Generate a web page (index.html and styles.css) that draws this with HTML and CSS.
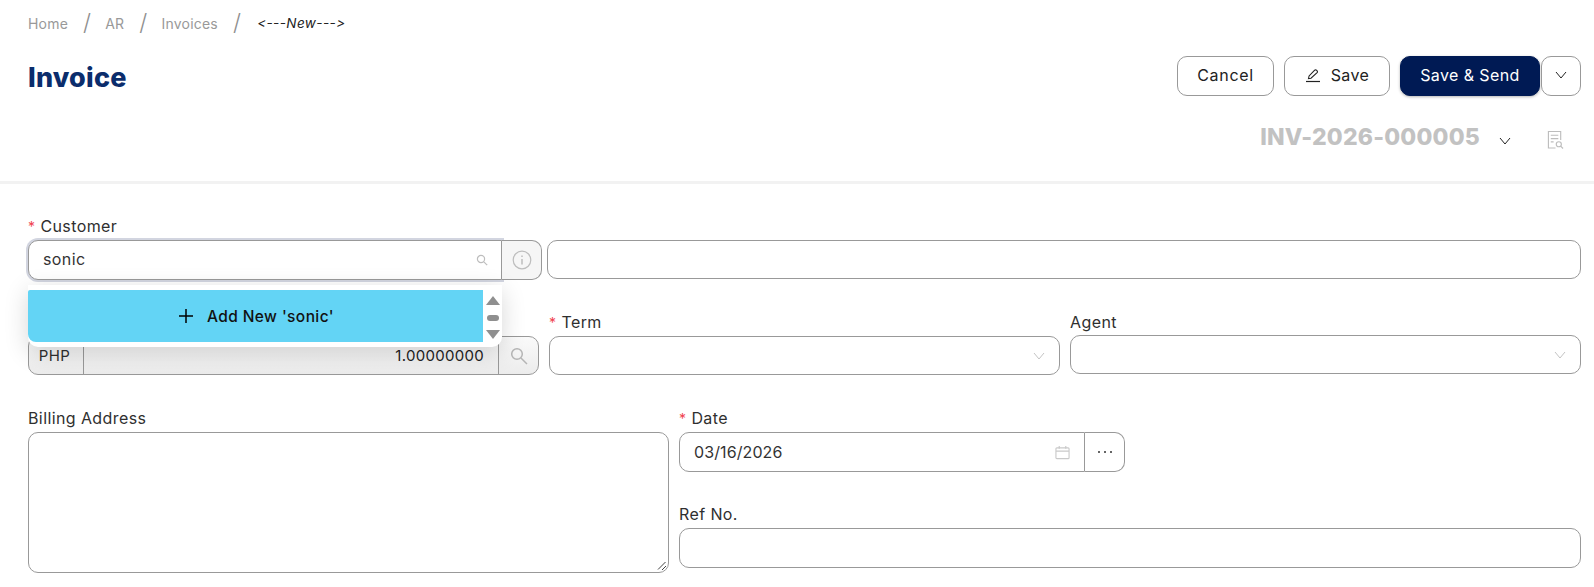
FILE: index.html
```html
<!DOCTYPE html>
<html lang="en">
<head>
<meta charset="utf-8">
<title>Invoice</title>
<link rel="stylesheet" href="styles.css">
</head>
<body>
<header class="head">
  <nav class="crumbs">
    <span class="crumb">Home</span><span class="sep">/</span>
    <span class="crumb">AR</span><span class="sep">/</span>
    <span class="crumb">Invoices</span><span class="sep">/</span>
    <span class="crumb-now">&lt;---New---&gt;</span>
  </nav>
  <div class="title-row">
    <h1 class="title">Invoice</h1>
    <div class="actions">
      <button class="btn btn-cancel">Cancel</button>
      <button class="btn btn-save">
        <svg class="pen" viewBox="0 0 16 16" width="16" height="16" fill="none" stroke="#222" stroke-width="1.1"><path d="M3.5 11.5l.6-2.6 5.6-5.7a1.2 1.2 0 0 1 1.7 0l.7.7a1.2 1.2 0 0 1 0 1.7L6 11.2z"/><path d="M1 14.5h14" stroke-width="1.2"/></svg>
        Save</button>
      <div class="split">
        <button class="btn btn-send">Save &amp; Send</button>
        <button class="btn btn-more"><svg viewBox="0 0 12 8" width="12" height="8" fill="none" stroke="#222" stroke-width="1"><path d="M1 1l5 6 5-6"/></svg></button>
      </div>
    </div>
  </div>
  <div class="number-row">
    <span class="number">INV-2026-000005</span>
    <svg class="num-chev" viewBox="0 0 12 8" width="12" height="8" fill="none" stroke="#222" stroke-width="1"><path d="M1 1l5 6 5-6"/></svg>
    <svg class="num-icon" viewBox="0 0 18 20" width="17" height="20" fill="none" stroke="#bdbdbd" stroke-width="1.2"><path d="M9 18.5H1.5V1h13v9"/><path d="M4 5h8M4 8.5h8M4 12h3"/><circle cx="12.5" cy="14.5" r="2.7"/><path d="M14.5 16.5l2.5 2.5"/></svg>
  </div>
</header>

<main class="form">
  <div class="row-customer">
    <div class="field field-customer">
      <label class="label"><span class="req">*</span>Customer</label>
      <div class="group group-focus">
        <div class="control control-focus">
          <span class="value value-search">sonic</span>
          <svg class="search-sm" viewBox="0 0 12 12" width="12" height="12" fill="none" stroke="#bdbdbd" stroke-width="1.2"><circle cx="5" cy="5" r="3.6"/><path d="M7.8 7.8l3.4 3.4"/></svg>
        </div>
        <div class="addon addon-info">
          <svg viewBox="0 0 20 20" width="20" height="20" fill="none" stroke="#bdbdbd" stroke-width="1.2"><circle cx="10" cy="10" r="8.8"/><path d="M10 9v5.5" stroke-width="1.5"/><path d="M10 5.4v1.6" stroke-width="1.5"/></svg>
        </div>
      </div>
      <div class="menu">
        <div class="menu-item">
          <svg viewBox="0 0 14 14" width="14" height="14" fill="none" stroke="#000" stroke-width="1.5"><path d="M7 0v14M0 7h14"/></svg>
          <span>Add New 'sonic'</span>
        </div>
        <div class="scroll">
          <span class="tri-up"></span>
          <span class="thumb"></span>
          <span class="tri-down"></span>
        </div>
      </div>
    </div>
    <div class="field field-name">
      <div class="control plain"></div>
    </div>
  </div>

  <div class="row-three">
    <div class="field field-currency">
      <div class="group group-gray">
        <div class="cur">PHP</div>
        <div class="rate">1.00000000</div>
        <div class="addon addon-search">
          <svg viewBox="0 0 18 18" width="18" height="18" fill="none" stroke="#b5b5b5" stroke-width="1.5"><circle cx="7" cy="7" r="5.3"/><path d="M11 11l6 6"/></svg>
        </div>
      </div>
    </div>
    <div class="field">
      <label class="label"><span class="req">*</span>Term</label>
      <div class="control select select-term">
        <svg viewBox="0 0 12 8" width="12" height="8" fill="none" stroke="#c4c4c4" stroke-width="1"><path d="M1 1l5 6 5-6"/></svg>
      </div>
    </div>
    <div class="field">
      <label class="label">Agent</label>
      <div class="control select">
        <svg viewBox="0 0 12 8" width="12" height="8" fill="none" stroke="#c4c4c4" stroke-width="1"><path d="M1 1l5 6 5-6"/></svg>
      </div>
    </div>
  </div>

  <div class="row-address">
    <div class="field field-address">
      <label class="label">Billing Address</label>
      <div class="textarea">
        <svg class="grip" viewBox="0 0 10 10" width="10" height="10" fill="none" stroke="#444" stroke-width="1"><path d="M1 8.5L8.5 1M5 9l4-4"/></svg>
      </div>
    </div>
    <div class="col-right">
      <div class="field field-date">
        <label class="label"><span class="req">*</span>Date</label>
        <div class="group group-tall">
          <div class="control date">
            <span class="value value-date">03/16/2026</span>
            <svg viewBox="0 0 16 15" width="15" height="15" fill="none" stroke="#c9c9c9" stroke-width="1.2"><rect x="1" y="2.5" width="14" height="11.5" rx="1"/><path d="M1 6h14M4.5 0.5v3M11.5 0.5v3"/></svg>
          </div>
          <div class="addon addon-dots">
            <svg viewBox="0 0 16 4" width="16" height="4" fill="#333"><circle cx="2" cy="2" r="1"/><circle cx="8" cy="2" r="1"/><circle cx="14" cy="2" r="1"/></svg>
          </div>
        </div>
      </div>
      <div class="field">
        <label class="label">Ref No.</label>
        <div class="control plain control-tall"></div>
      </div>
    </div>
  </div>
</main>
</body>
</html>
```

FILE: styles.css
```css
* { box-sizing: border-box; }
html, body { height: 100%; }
body {
  margin: 0;
  height: 587px;
  overflow: hidden;
  background: #fff;
  color: #2f2f2f;
  font-family: Inter, "Noto Sans", sans-serif;
  font-size: 16px;
  letter-spacing: .4px;
}
button { font: inherit; letter-spacing: inherit; cursor: pointer; }

.head {
  height: 184px;
  padding: 12px 13px 0 28px;
  border-bottom: 3px solid #f2f2f2;
}
.crumbs {
  display: flex;
  align-items: center;
  height: 22px;
  font-size: 14px;
  letter-spacing: .2px;
}
.crumb { color: #999; }
.sep { color: #8f8f8f; font-size: 23px; font-weight: 300; margin: 0 14px 0 15px; }
.crumb-now { color: #222; font-size: 13.5px; font-style: italic; letter-spacing: .4px; margin-left: 2px; }

.title-row {
  display: flex;
  justify-content: space-between;
  align-items: center;
  margin-top: 22px;
  height: 40px;
}
.title {
  margin: 0;
  padding-top: 2px;
  color: #0b2d6c;
  font-size: 27px;
  font-weight: 800;
  letter-spacing: .2px;
}
.actions { display: flex; gap: 10px; }
.split { display: flex; gap: 1px; }
.btn {
  height: 40px;
  padding: 0 0 2px;
  border: 1px solid #999;
  border-radius: 10px;
  background: #fff;
  color: #222;
  display: flex;
  align-items: center;
  justify-content: center;
}
.btn-cancel { width: 97px; letter-spacing: .7px; }
.btn-save { width: 106px; gap: 10px; }
.btn-send {
  width: 140px;
  background: #001a54;
  border-color: #001a54;
  color: #fff;
  box-shadow: 0 1px 3px rgba(0,0,0,.3);
}
.btn-more { width: 40px; padding-bottom: 3px; }

.number-row {
  display: flex;
  align-items: center;
  justify-content: flex-end;
  height: 30px;
  margin-top: 27px;
  padding-right: 17px;
}
.number { color: #c2c2c2; font-size: 23px; font-weight: 800; letter-spacing: .2px; margin-top: -2px; }
.num-chev { margin: 6px 0 0 19px; }
.num-icon { margin: 4px 0 0 36px; }

.form {
  padding: 0 13px 0 28px;
}
.field { display: flex; flex-direction: column; position: relative; min-width: 0; }
.label { height: 21px; line-height: 19px; margin-bottom: 2px; }
.row-three .label { line-height: 21px; }
.req { color: #f0424f; font-size: 14px; margin-right: 5px; }

.control {
  height: 39px;
  border: 1px solid #999;
  border-radius: 10px;
  background: #fff;
  display: flex;
  align-items: center;
}
.control-tall { height: 40px; }
.group { display: flex; height: 39px; }
.group-tall { height: 40px; }
.group .control { flex: 1; height: auto; border-radius: 10px 0 0 10px; }
.addon {
  display: flex;
  align-items: center;
  justify-content: center;
  border: 1px solid #999;
  border-left: 0;
  border-radius: 0 10px 10px 0;
}

.row-customer { display: flex; gap: 5px; padding-top: 33px; align-items: flex-end; }
.field-customer { width: 514px; flex: none; }
.field-name { flex: 1; margin-bottom: 1px; }
.group-focus { height: 40px; }
.control-focus {
  padding: 0 14px;
  justify-content: space-between;
  box-shadow: 0 0 0 2px #d2d5e0;
}
.addon-info { width: 40px; background: #f6f6f6; }
.value { color: #333; }
.value-search { padding-bottom: 2px; }
.value-date { letter-spacing: .1px; }
.search-sm { margin-right: -1px; }

.menu {
  position: absolute;
  z-index: 5;
  left: 0;
  top: 68px;
  width: 474px;
  height: 62px;
  padding-top: 5px;
  background: #fff;
  border-radius: 0 0 10px 10px;
  box-shadow: 0 6px 24px rgba(0,0,0,.16);
  display: flex;
  align-items: flex-start;
}
.menu-item {
  width: 455px;
  height: 52px;
  padding-left: 2px;
  background: #63d4f5;
  border-radius: 2px 0 0 8px;
  color: #111;
  font-size: 15.5px;
  font-weight: 500;
  display: flex;
  align-items: center;
  justify-content: center;
  gap: 14px;
}
.scroll {
  flex: 1;
  height: 52px;
  display: flex;
  flex-direction: column;
  align-items: center;
  justify-content: space-between;
  padding: 6px 0 3px;
}
.tri-up, .tri-down {
  width: 0;
  height: 0;
  border-left: 7px solid transparent;
  border-right: 7px solid transparent;
}
.tri-up { border-bottom: 9px solid #8f8f8f; }
.tri-down { border-top: 9px solid #8f8f8f; }
.thumb { width: 12px; height: 6px; border-radius: 3px; background: #8f8f8f; }

.row-three {
  display: grid;
  grid-template-columns: 511px 1fr 1fr;
  gap: 10px;
  align-items: end;
  margin-top: 32px;
}
.group-gray {
  background: linear-gradient(#fafafa, #ececec);
  border: 1px solid #999;
  border-radius: 10px;
  margin: 1px 0 -1px;
}
.cur {
  width: 55px;
  padding-right: 3px;
  border-right: 1px solid #999;
  display: flex;
  align-items: center;
  justify-content: center;
  font-size: 15px;
}
.rate {
  flex: 1;
  display: flex;
  align-items: center;
  justify-content: flex-end;
  padding-right: 14px;
  color: #222;
  font-size: 15px;
  letter-spacing: .3px;
}
.addon-search { width: 40px; border: 0; border-left: 1px solid #999; border-radius: 0; }
.select { justify-content: flex-end; padding: 0 14px 0 0; }
.select-term { margin: 1px 0 -1px; }

.row-address {
  display: grid;
  grid-template-columns: 641px 1fr;
  gap: 10px;
  margin-top: 35px;
}
.textarea {
  height: 141px;
  border: 1px solid #999;
  border-radius: 10px;
  position: relative;
}
.grip { position: absolute; right: 1px; bottom: 1px; }
.col-right { display: flex; flex-direction: column; gap: 33px; }
.field-date { width: 446px; }
.date { padding: 0 14px; justify-content: space-between; }
.addon-dots { width: 40px; }
```
